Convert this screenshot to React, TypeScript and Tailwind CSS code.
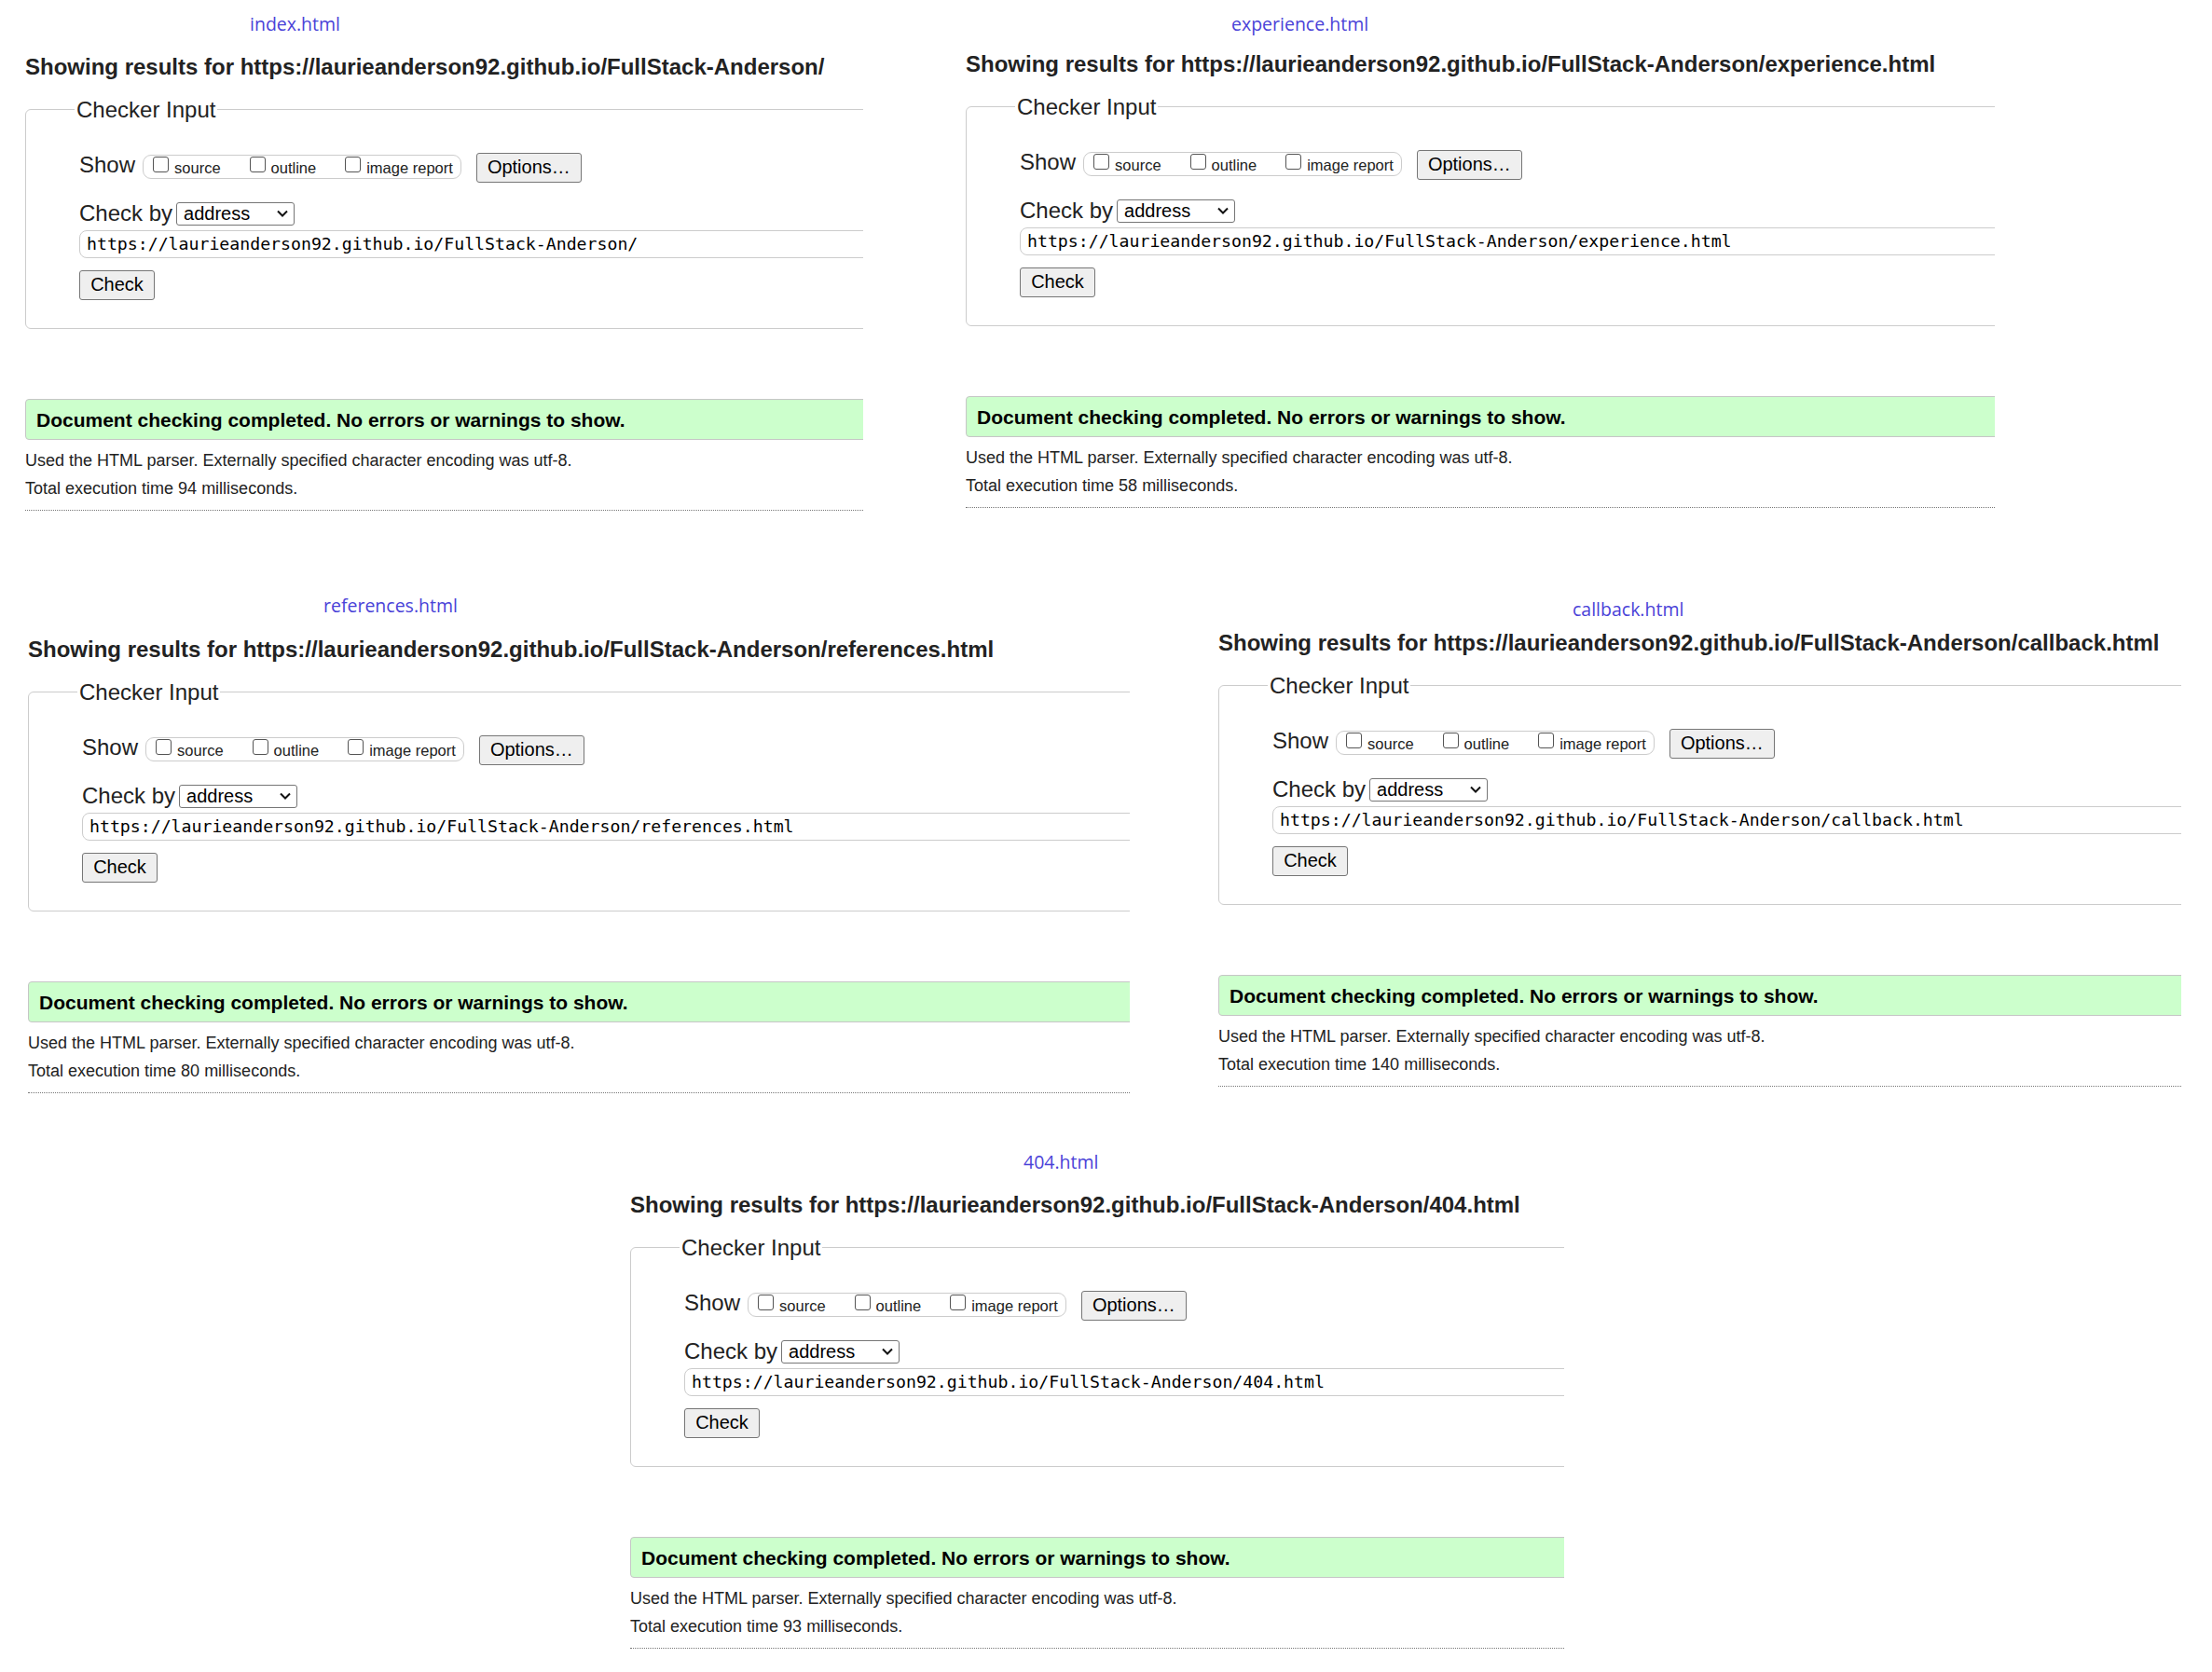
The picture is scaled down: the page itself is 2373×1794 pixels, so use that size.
import React from "react";

type Shot = {
  page: string;
  ms: number;
  box: string;
  caption: string;
  gap: string;
};

const BASE = "https://laurieanderson92.github.io/FullStack-Anderson/";

const rows: Shot[][] = [
  [
    { page: "index.html", ms: 94, box: "ml-[27px] w-[899px]", caption: "mt-[12px] ml-[241px]", gap: "mt-[18.7px]" },
    { page: "experience.html", ms: 58, box: "ml-[110px] w-[1104px]", caption: "mt-[12px] ml-[285px]", gap: "mt-[15.7px]" },
  ],
  [
    { page: "references.html", ms: 80, box: "ml-[30px] w-[1182px]", caption: "mt-[88px] ml-[317px]", gap: "mt-[19.7px]" },
    { page: "callback.html", ms: 140, box: "ml-[95px] w-[1033px]", caption: "mt-[92px] ml-[380px]", gap: "mt-[8.7px]" },
  ],
  [
    { page: "404.html", ms: 93, box: "ml-[676px] w-[1002px]", caption: "mt-[60px] ml-[422px]", gap: "mt-[18.7px]" },
  ],
];

function ShowOptions() {
  return (
    <div className="mt-[32px] h-[32px] flex items-start">
      <span className="mt-[-0.5px] text-[24px] leading-[28px]">Show</span>
      <div className="ml-[8px] mt-[2px] h-[26px] flex items-start border border-[#ccc] rounded-[9px] pl-[10px] pr-[8px]">
        {["source", "outline", "image report"].map((label, i) => (
          <span key={label} className={i ? "flex items-start ml-[31px]" : "flex items-start"}>
            <span className="mt-[1px] w-[17px] h-[17px] border-[1.5px] border-[#555] rounded-[3px] bg-white" />
            <span className="ml-[6px] mt-[3.5px] text-[16.5px] leading-[20px]">{label}</span>
          </span>
        ))}
      </div>
      <button className="ml-[16px] w-[113px] h-[32px] border border-[#767676] rounded-[3px] bg-[#efefef] text-[20px] leading-[23px] text-black">
        Options…
      </button>
    </div>
  );
}

function ValidatorShot({ shot }: { shot: Shot }) {
  const url = shot.page === "index.html" ? BASE : BASE + shot.page;

  return (
    <div className={`flex flex-col ${shot.box}`}>
      <p className={`self-start text-[19.5px] leading-[27px] text-[#4a42d8] font-['Open_Sans',sans-serif] ${shot.caption}`}>
        {shot.page}
      </p>

      {/* cropped screenshot of the validator page */}
      <div className={`overflow-hidden ${shot.gap}`}>
        <div className="w-[calc(100%+40px)] font-['Liberation_Sans',Arial,sans-serif] text-[#222]">
          <h2 className="text-[24px] leading-[28px] font-bold whitespace-nowrap">Showing results for {url}</h2>

          <fieldset className="mt-[18.3px] border border-[#ccc] rounded-[6px] pl-[57px] pb-[30px]">
            <legend className="ml-[-5px] px-[2px] text-[24px] leading-[28px]">Checker Input</legend>

            <ShowOptions />

            <div className="mt-[21px] h-[25px] flex items-start">
              <span className="mt-[-2px] text-[24px] leading-[28px]">Check by</span>
              <div className="ml-[4px] w-[127px] h-[25px] flex items-center border border-[#767676] rounded-[3px] pl-[7px] pr-[6px] text-[20px] leading-[23px] text-black">
                <span className="flex-1">address</span>
                <svg width="12" height="8" viewBox="0 0 12 8" fill="none">
                  <path d="M1 1.5 L6 6.5 L11 1.5" stroke="#111" strokeWidth="2" />
                </svg>
              </div>
            </div>

            <div className="mt-[5px] h-[30px] border border-[#ccc] rounded-l-[8px] pl-[7px] font-['DejaVu_Sans_Mono',monospace] text-[18.2px] leading-[28px] text-black whitespace-nowrap">
              {url}
            </div>

            <button className="mt-[13px] w-[81px] h-[32px] border border-[#767676] rounded-[3px] bg-[#efefef] text-[20px] leading-[23px] text-black">
              Check
            </button>
          </fieldset>

          <div className="mt-[75px] h-[44px] border border-[#c6c6c6] rounded-[4px] bg-[#ccffcc] pl-[11px] pt-[10px] text-[21px] leading-[24px] font-bold text-black whitespace-nowrap">
            Document checking completed. No errors or warnings to show.
          </div>
          <p className="mt-[7px] text-[18px] leading-[30px]">
            Used the HTML parser. Externally specified character encoding was utf-8.
          </p>
          <p className="text-[18px] leading-[30px]">Total execution time {shot.ms} milliseconds.</p>
          <div className="mt-[8px] border-t border-dotted border-[#777]" />
        </div>
      </div>
    </div>
  );
}

export default function App() {
  return (
    <div className="w-[2373px] h-[1794px] bg-white overflow-hidden flex flex-col">
      {rows.map((row, i) => (
        <div key={i} className="flex items-start">
          {row.map((shot) => (
            <ValidatorShot key={shot.page} shot={shot} />
          ))}
        </div>
      ))}
    </div>
  );
}
